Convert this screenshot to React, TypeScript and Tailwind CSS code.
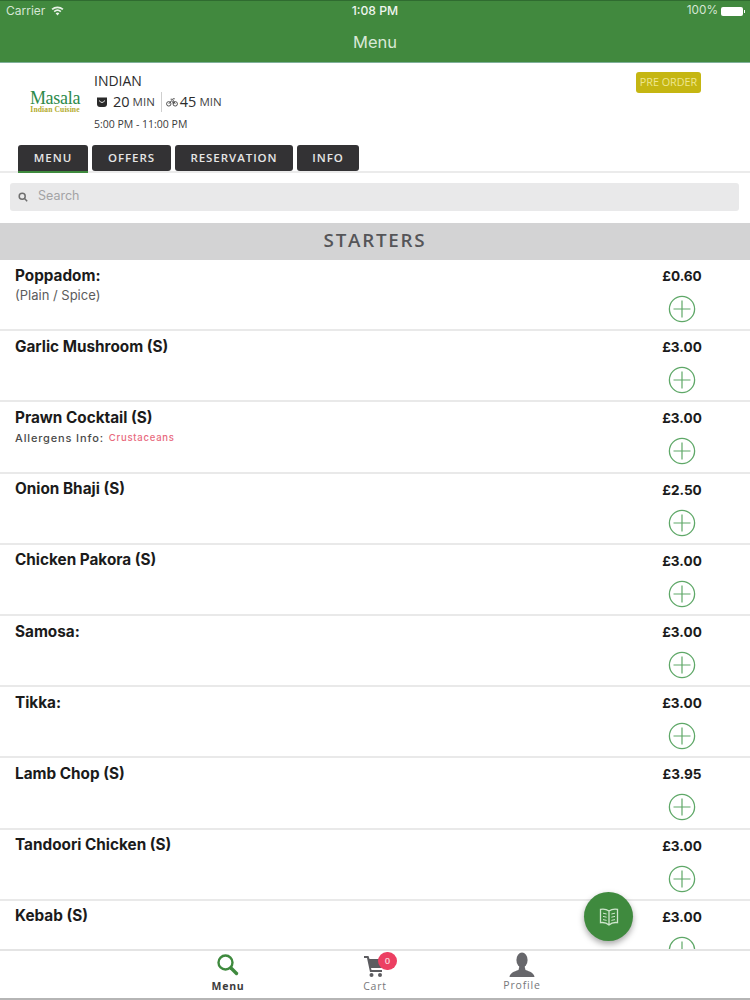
import React from "react";

const items: { name: string; price: string; sub?: string; allergen?: string }[] = [
  { name: "Poppadom:", price: "£0.60", sub: "(Plain / Spice)" },
  { name: "Garlic Mushroom (S)", price: "£3.00" },
  { name: "Prawn Cocktail (S)", price: "£3.00", allergen: "Crustaceans" },
  { name: "Onion Bhaji (S)", price: "£2.50" },
  { name: "Chicken Pakora (S)", price: "£3.00" },
  { name: "Samosa:", price: "£3.00" },
  { name: "Tikka:", price: "£3.00" },
  { name: "Lamb Chop (S)", price: "£3.95" },
  { name: "Tandoori Chicken (S)", price: "£3.00" },
  { name: "Kebab (S)", price: "£3.00" },
];

const tabs = ["MENU", "OFFERS", "RESERVATION", "INFO"];
const tabWidths = ["w-[70px]", "w-[79px]", "w-[118px]", "w-[62px]"];

function Plus() {
  return (
    <svg width="28" height="28" viewBox="0 0 28 28" fill="none" stroke="#5fa868">
      <circle cx="14" cy="14" r="12.6" strokeWidth="1.3" />
      <path d="M14 5.5V22.5M5.5 14H22.5" strokeWidth="1.2" />
    </svg>
  );
}

function Row({ item }: { item: (typeof items)[number] }) {
  return (
    <div className="h-[71.2px] shrink-0 border-b-2 border-[#e9e9e9] flex justify-between pl-[15px] pr-[48px]">
      <div className="pt-[4.6px] flex flex-col">
        <div className="text-[15.3px] leading-[22px] font-bold text-[#1b1b1b] font-['Inter',sans-serif]">{item.name}</div>
        {item.sub && (
          <div className="text-[13px] leading-[18px] -mt-[1px] text-[#5c5c5c] font-['Inter',sans-serif]">{item.sub}</div>
        )}
        {item.allergen && (
          <div className="flex items-center mt-[1px] h-[16px] font-['Inter',sans-serif]">
            <span className="text-[11px] font-medium tracking-[0.85px] text-[#4a4a4a]">Allergens Info:</span>
            <span className="text-[9.5px] font-medium tracking-[0.75px] text-[#e8697d] ml-[5px]">{item.allergen}</span>
          </div>
        )}
      </div>
      <div className="w-[40px] flex flex-col items-center pt-[6px]">
        <div className="text-[13.6px] leading-[20px] font-bold text-[#1b1b1b] font-['Inter',sans-serif] whitespace-nowrap">{item.price}</div>
        <div className="mt-[9px]"><Plus /></div>
      </div>
    </div>
  );
}

export default function App() {
  return (
    <div className="relative w-[750px] h-[1000px] overflow-hidden bg-white flex flex-col font-['Open_Sans',sans-serif]">
      <header className="h-[63px] shrink-0 bg-[#41893e] border-t border-[#2f6b30] border-b border-b-[#7fb09a] flex flex-col text-white">
        <div className="h-[20px] flex items-center justify-between pl-[6px] pr-[5px] font-['Inter',sans-serif] text-[12px] relative">
          <div className="flex items-center gap-[6px] text-[#d5e6d4]">
            <span>Carrier</span>
            <svg width="13" height="10" viewBox="0 0 13 10" fill="#e8f2e8">
              <path d="M6.5 9.5 4.6 7.3a2.9 2.9 0 0 1 3.8 0ZM3.7 6.3 2.6 5a6 6 0 0 1 7.8 0L9.3 6.3a4.3 4.3 0 0 0-5.6 0ZM1.7 4 .5 2.7a9.1 9.1 0 0 1 12 0L11.3 4a7.4 7.4 0 0 0-9.6 0Z" />
            </svg>
          </div>
          <span className="absolute left-0 right-0 text-center font-medium text-[12.2px] text-[#eef5ee]">1:08 PM</span>
          <div className="flex items-center gap-[3px] text-[#d5e6d4]">
            <span className="text-[11.8px]">100%</span>
            <div className="w-[22px] h-[9px] bg-white rounded-[2px]" />
            <div className="w-[1px] h-[3px] bg-white -ml-[2px]" />
          </div>
        </div>
        <div className="flex-1 flex items-center justify-center text-[16.5px] text-[#d8e8d6] font-['Inter',sans-serif] pt-[1px]">Menu</div>
      </header>

      <section className="h-[82px] shrink-0 relative flex">
        <div className="w-[94px] shrink-0 flex flex-col items-center pl-[16px] pt-[28px] font-['Liberation_Serif',serif]">
          <div className="text-[18px] leading-[15px] text-[#2d8a4a] tracking-[-0.3px]">Masala</div>
          <div className="text-[7.6px] leading-[8px] font-bold text-[#b3ac2c] tracking-[0.1px]">Indian Cuisine</div>
        </div>
        <div className="pt-[8px] text-[#2b2b2b]">
          <div className="text-[14px] leading-[19px]">INDIAN</div>
          <div className="flex items-center h-[22px] mt-[1px]">
            <svg width="12" height="12" viewBox="0 0 12 12" className="ml-[2px]">
              <path d="M1 1.5 H11 V8 A3 3 0 0 1 8 11 H4 A3 3 0 0 1 1 8 Z" fill="#2a2a2a" />
              <path d="M3.5 4.5 C4 7 8 7 8.5 4.5" stroke="#fff" strokeWidth="1" fill="none" />
            </svg>
            <span className="text-[14.5px] ml-[5px]">20</span>
            <span className="text-[11.5px] ml-[3px] text-[#444]">MIN</span>
            <div className="w-px h-[20px] bg-[#cfcfcf] ml-[6px] mr-[4px]" />
            <svg width="12" height="10" viewBox="0 0 13 10" fill="none" stroke="#333" strokeWidth="0.9">
              <circle cx="3" cy="7" r="2.4" />
              <circle cx="10" cy="7" r="2.4" />
              <path d="M3 7 6 3.5 8.5 7M5 2H7L10 7M7.5 1.5H9.5" />
            </svg>
            <span className="text-[14.5px] ml-[2px]">45</span>
            <span className="text-[11.5px] ml-[3px] text-[#444]">MIN</span>
          </div>
          <div className="text-[10.5px] leading-[16px] mt-[3px] text-[#3a3a3a]">5:00 PM - 11:00 PM</div>
        </div>
        <div className="absolute left-[636px] top-[9px] w-[65px] h-[21px] rounded-[3px] bg-[#c5b612] text-[#eee68f] text-[10.8px] flex items-center justify-center whitespace-nowrap">PRE ORDER</div>
      </section>

      <nav className="h-[28px] shrink-0 flex gap-[4px] pl-[18px] border-b-2 border-[#ebebeb]">
        {tabs.map((t, i) => (
          <div key={t} className={`${tabWidths[i]} ${i === 0 ? "h-[28px] border-b-2 border-[#3f8a3e] rounded-t-[3px]" : "h-[26px] rounded-[3px]"} bg-[#333234] text-[#e6e6e6] text-[11.5px] font-semibold tracking-[0.95px] flex items-center justify-center`}>
            {t}
          </div>
        ))}
      </nav>

      <div className="shrink-0 pt-[10px] pl-[10px] pr-[11px]">
        <div className="h-[28px] bg-[#e9e9ea] rounded-[3px] flex items-center pl-[8px] pb-[1px]">
          <svg width="10" height="10" viewBox="0 0 10 10" fill="none" stroke="#6f6f6f" strokeWidth="1.5">
            <circle cx="4.2" cy="4.2" r="3" />
            <path d="M6.5 6.5 9.2 9.2" />
          </svg>
          <span className="ml-[10px] text-[12.5px] text-[#a3a3a5] font-['Inter',sans-serif]">Search</span>
        </div>
      </div>

      <div className="h-[37px] shrink-0 mt-[12px] pb-[2px] bg-[#d3d3d4] flex items-center justify-center text-[18.8px] font-semibold tracking-[1.75px] text-[#555558]">STARTERS</div>

      <main className="flex-1 min-h-0 overflow-hidden flex flex-col">
        {items.map((it) => (
          <Row key={it.name} item={it} />
        ))}
      </main>

      <footer className="h-[51px] shrink-0 bg-white border-t-2 border-[#e4e4e4] border-b-2 border-b-[#b5b5b5] flex pl-[130px] pr-[130px]">
        <div className="w-[196px] flex flex-col items-center pt-[3px]">
          <svg width="24" height="24" viewBox="0 0 24 24" fill="none" stroke="#3f8a3e" className="-mt-[1px] mb-[1px]">
            <circle cx="9.5" cy="9.5" r="7" strokeWidth="2.4" />
            <path d="M15 15 20.5 20.5" strokeWidth="3.4" strokeLinecap="round" />
          </svg>
          <span className="text-[10.5px] font-bold tracking-[0.8px] text-[#3c3c3c] leading-[14px] mt-[1px]">Menu</span>
        </div>
        <div className="w-[98px] flex flex-col items-center pt-[3px] relative">
          <svg width="24" height="24" viewBox="0 0 24 24" fill="#5c5c60">
            <path d="M1 2H5.5L6.5 5H22L19 14H8L8.5 16H19V18H7L4 4H1Z" />
            <circle cx="8.5" cy="21" r="2" />
            <circle cx="17" cy="21" r="2" />
          </svg>
          <span className="text-[10.5px] font-medium tracking-[0.8px] text-[#77777a] leading-[14px] mt-[1px]">Cart</span>
          <div className="absolute left-[52px] top-[1px] w-[19px] h-[18px] rounded-full bg-[#ec3f62] text-[#f8d5dc] text-[9.5px] font-semibold flex items-center justify-center">0</div>
        </div>
        <div className="w-[196px] flex flex-col items-center pt-[1px]">
          <svg width="26" height="26" viewBox="0 0 26 26" fill="#67676b">
            <ellipse cx="13" cy="8" rx="5.6" ry="7.4" />
            <path d="M0.5 25C1 21 5 19.5 9.5 18L10.5 14H15.5L16.5 18C21 19.5 25 21 25.5 25Z" />
          </svg>
          <span className="text-[10.5px] font-medium tracking-[0.8px] text-[#77777a] leading-[14px]">Profile</span>
        </div>
      </footer>

      <div className="absolute left-[584px] top-[892px] w-[49px] h-[49px] rounded-full bg-[#3f8a3e] shadow-[0_3px_6px_rgba(0,0,0,0.35)] flex items-center justify-center">
        <svg width="20" height="20" viewBox="0 0 20 20" fill="none" stroke="#cfe6cd" strokeWidth="1.3">
          <path d="M10 4 C8 2.5 4.5 1.8 1.5 2.3 V15.7 C4.5 15.2 8 16.2 10 18 C12 16.2 15.5 15.2 18.5 15.7 V2.3 C15.5 1.8 12 2.5 10 4 Z M10 4 V18" />
          <path d="M4 6.2 7.6 7M4 9.4 7.6 10.2M4 12.6 7.6 13.4M16 6.2 12.4 7M16 9.4 12.4 10.2M16 12.6 12.4 13.4" strokeWidth="1" />
        </svg>
      </div>
    </div>
  );
}
